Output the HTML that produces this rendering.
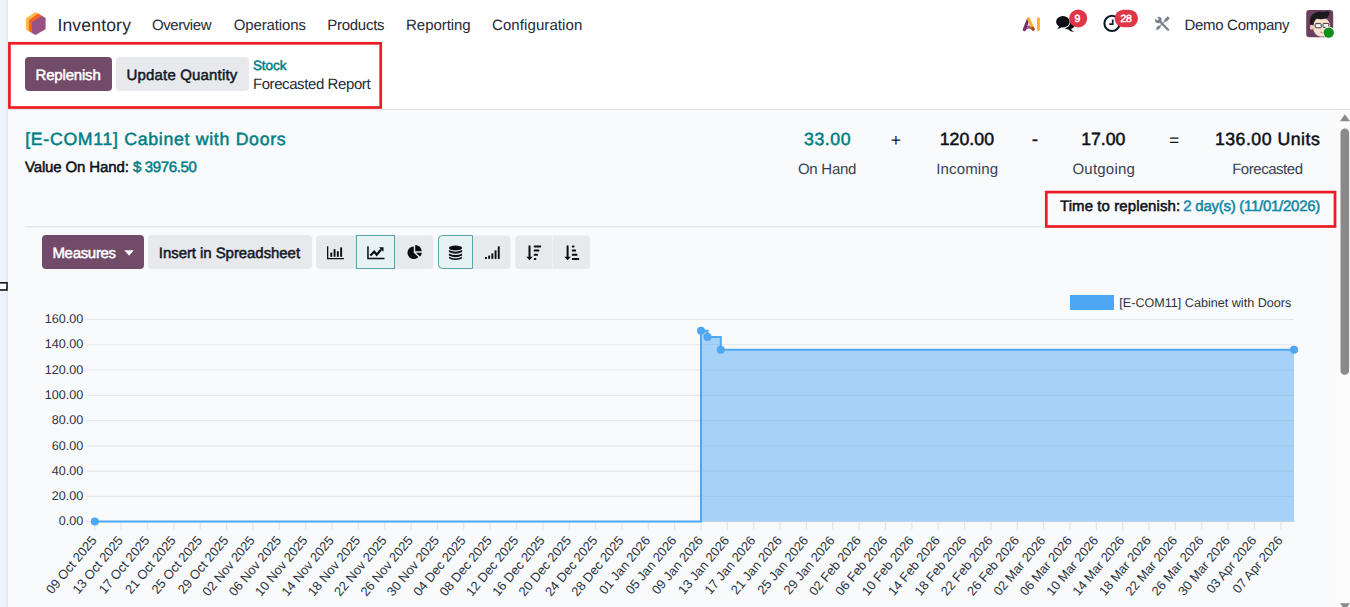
<!DOCTYPE html>
<html lang="en">
<head>
<meta charset="utf-8">
<title>Forecasted Report</title>
<style>
*{box-sizing:border-box;margin:0;padding:0}
html,body{width:1350px;height:607px;overflow:hidden;background:#f9fafb;font-family:"Liberation Sans",sans-serif;color:#1f2937}
.abs{position:absolute;white-space:nowrap}
.t{position:absolute;white-space:nowrap;line-height:1}
#strip{position:absolute;left:0;top:0;width:6px;height:607px;background:#ecf3fb}
#strip2{position:absolute;left:6px;top:0;width:2px;height:607px;background:#e4ebf0}
#nav{position:absolute;left:8px;top:0;width:1342px;height:46px;background:#fff}
#cp{position:absolute;left:8px;top:46px;width:1342px;height:64px;background:#fff;border-bottom:1px solid #dcdfe3}
.btn{position:absolute;border-radius:4px}
.chart text.ax{font-family:"Liberation Sans",sans-serif;font-size:12.6px;fill:#2d3442;text-rendering:geometricPrecision}
.sep{position:absolute;left:24px;top:225.5px;width:1296px;height:1px;background:#e1e3e6}
.ov{position:absolute;left:0;top:0;pointer-events:none}
</style>
</head>
<body>
<div id="strip"></div><div id="strip2"></div>
<div id="nav"></div>
<div id="cp"></div>

<!-- navbar -->
<svg class="abs" style="left:0;top:0" width="1350" height="46" viewBox="0 0 1350 46">
  <!-- app logo -->
  <polygon points="35.5,11.9 38.8,13.9 29.4,20.4 29.4,31.5 25.9,29.4 25.9,18.2" fill="#fbb945"/>
  <polygon points="28.9,20.1 38.3,13.6 42.3,16 32.4,22.4 32.4,33.2 28.9,31.2" fill="#f9651e"/>
  <polygon points="31.9,22.1 41.8,15.7 45.6,17.9 45.6,29.2 35.5,35.1 31.9,32.9" fill="#985184"/>
  <!-- AI icon -->
  <g fill="none" stroke-linecap="round" stroke-width="3">
    <path d="M1024.3,29.6 Q1029,24.5 1033.2,29.2" stroke="#a2568f"/>
    <path d="M1024.3,29.6 L1028.2,19.5" stroke="#7a2f6c"/>
    <path d="M1031.2,25.5 L1033.3,29.2" stroke="#a9481f"/>
    <path d="M1028.6,18.6 L1031.6,25.8" stroke="#fbb130"/>
    <path d="M1038.4,18.7 L1038.4,29.6" stroke="#fbb130"/>
  </g>
  <!-- chat icon -->
  <g fill="#0b0d14">
    <ellipse cx="1068.6" cy="24.6" rx="6.2" ry="4.9"/>
    <path d="M1070.6,28.6 q1.2,2.2 3.6,3.2 q-3.4,0.4 -6,-2.2z"/>
    <ellipse cx="1062.9" cy="21.8" rx="7.6" ry="6.5" fill="#fff"/>
    <ellipse cx="1062.9" cy="21.8" rx="6.8" ry="5.7"/>
    <path d="M1059.4,25.4 q-0.5,2 -2.2,3.4 q2.9,-0.1 4.8,-2z"/>
  </g>
  <circle cx="1078.2" cy="18.4" r="9" fill="#df3648"/>
  <!-- clock -->
  <circle cx="1112" cy="23.4" r="7.6" fill="#fff" stroke="#111827" stroke-width="2.1"/>
  <path d="M1112.7,19.4 V24.2 H1109.3" fill="none" stroke="#111827" stroke-width="1.7"/>
  <rect x="1114.7" y="9.7" width="23.3" height="17.6" rx="8.8" fill="#df3648"/>
  <!-- tools -->
  <g stroke="#7b818d" fill="none">
    <path d="M1160.2,21.8 L1168.1,29.8" stroke-width="2.3" stroke-linecap="round"/>
    <circle cx="1158.4" cy="20" r="3.3" fill="#7b818d" stroke="none"/>
    <path d="M1158.2,19.8 L1154.4,16" stroke="#fff" stroke-width="2.1"/>
    <path d="M1168.8,17.2 L1165,21" stroke-width="2.9"/>
    <path d="M1165.4,20.6 L1159.2,26.8" stroke-width="1.1"/>
    <path d="M1159.8,26.2 L1157,29" stroke-width="2.6"/>
    <path d="M1157.9,26.3 L1159.7,28.1 L1155.4,30.6z" fill="#7b818d" stroke="none"/>
  </g>
  <!-- avatar -->
  <g>
    <rect x="1306.2" y="10" width="27" height="27.3" rx="3.2" fill="#6b3f5d"/>
    <ellipse cx="1321.6" cy="27" rx="8.6" ry="9.8" fill="#f7dfd0"/>
    <ellipse cx="1311.6" cy="27.2" rx="1.6" ry="2.6" fill="#f1cdb8"/>
    <path d="M1309.8,24.5 q-1,-7.5 4,-11 q5,-3 10,-1.5 q3.5,-1.5 5.5,-0.2 q0.6,4 -2.6,6.4 q-6,1.8 -10,0.2 q-2.8,1.2 -3.4,6.6 q-2,-0.8 -3.5,-0.5z" fill="#1b1b1d"/>
    <rect x="1315.2" y="23.6" width="6" height="4.2" rx="0.8" fill="#f4f4f4" stroke="#3a3a3c" stroke-width="1"/>
    <rect x="1323" y="23.4" width="5.8" height="4" rx="0.8" fill="#f4f4f4" stroke="#3a3a3c" stroke-width="1"/>
    <path d="M1320.4,32 q2.4,1.6 5,0.2" stroke="#9a5a4e" stroke-width="0.8" fill="none"/>
    <circle cx="1328.7" cy="32.6" r="6" fill="#fff"/>
    <circle cx="1328.7" cy="32.6" r="5.2" fill="#0b8f1b"/>
  </g>
</svg>
<span class="t" style="left:57.41px;top:17.00px;font-size:17.5px;text-rendering:geometricPrecision;letter-spacing:0.186px;color:#1f2937">Inventory</span>
<span class="t" style="left:152.00px;top:18.21px;font-size:15px;text-rendering:geometricPrecision;letter-spacing:-0.433px;color:#1f2937">Overview</span>
<span class="t" style="left:233.70px;top:18.21px;font-size:15px;text-rendering:geometricPrecision;letter-spacing:-0.129px;color:#1f2937">Operations</span>
<span class="t" style="left:327.18px;top:18.21px;font-size:15px;text-rendering:geometricPrecision;letter-spacing:-0.250px;color:#1f2937">Products</span>
<span class="t" style="left:406.08px;top:18.21px;font-size:15px;text-rendering:geometricPrecision;letter-spacing:-0.057px;color:#1f2937">Reporting</span>
<span class="t" style="left:491.96px;top:18.21px;font-size:15px;text-rendering:geometricPrecision;letter-spacing:0.095px;color:#1f2937">Configuration</span>
<span class="t" style="left:1184.38px;top:18.21px;font-size:15px;text-rendering:geometricPrecision;letter-spacing:-0.292px;color:#1f2937">Demo Company</span>
<span class="t" style="left:1074.60px;top:13.76px;font-size:10.5px;text-rendering:geometricPrecision;-webkit-text-stroke:0.5px currentColor;letter-spacing:0.000px;color:#ffffff">9</span>
<span class="t" style="left:1120.48px;top:13.76px;font-size:10.5px;text-rendering:geometricPrecision;-webkit-text-stroke:0.5px currentColor;letter-spacing:-0.277px;color:#ffffff">28</span>

<!-- control panel -->
<div class="btn" style="left:24.7px;top:57.2px;width:87px;height:34px;background:#714b67"></div>
<span class="t" style="left:35.55px;top:67.77px;font-size:15px;text-rendering:geometricPrecision;-webkit-text-stroke:0.5px currentColor;letter-spacing:-0.187px;color:#ffffff">Replenish</span>
<div class="btn" style="left:116px;top:57.2px;width:132.6px;height:34px;background:#e7e9ed"></div>
<span class="t" style="left:126.61px;top:67.77px;font-size:15px;text-rendering:geometricPrecision;-webkit-text-stroke:0.5px currentColor;letter-spacing:0.162px;color:#111827">Update Quantity</span>
<span class="t" style="left:252.91px;top:58.76px;font-size:13.5px;text-rendering:geometricPrecision;-webkit-text-stroke:0.5px currentColor;letter-spacing:-0.046px;color:#017e84">Stock</span>
<span class="t" style="left:252.88px;top:77.21px;font-size:15px;text-rendering:geometricPrecision;letter-spacing:-0.407px;color:#1f2937">Forecasted Report</span>

<!-- header -->
<span class="t" style="left:25.21px;top:130.72px;font-size:17.7px;text-rendering:geometricPrecision;-webkit-text-stroke:0.5px currentColor;letter-spacing:0.701px;color:#017e84">[E-COM11] Cabinet with Doors</span>
<span class="t" style="left:24.97px;top:159.77px;font-size:15px;text-rendering:geometricPrecision;-webkit-text-stroke:0.5px currentColor;letter-spacing:-0.138px;color:#0b0f19">Value On Hand:</span>
<span class="t" style="left:132.93px;top:159.77px;font-size:15px;text-rendering:geometricPrecision;-webkit-text-stroke:0.5px currentColor;letter-spacing:-0.358px;color:#017e84">$ 3976.50</span>
<span class="t" style="left:804.05px;top:130.72px;font-size:17.7px;text-rendering:geometricPrecision;-webkit-text-stroke:0.5px currentColor;letter-spacing:0.563px;color:#017e84">33.00</span>
<span class="t" style="left:890.79px;top:131.50px;font-size:17.5px;text-rendering:geometricPrecision;letter-spacing:0.000px;color:#111827">+</span>
<span class="t" style="left:939.69px;top:130.72px;font-size:17.7px;text-rendering:geometricPrecision;-webkit-text-stroke:0.5px currentColor;letter-spacing:0.036px;color:#0b0f19">120.00</span>
<span class="t" style="left:1031.95px;top:130.72px;font-size:17.7px;text-rendering:geometricPrecision;-webkit-text-stroke:0.5px currentColor;letter-spacing:0.000px;color:#111827">-</span>
<span class="t" style="left:1081.29px;top:130.72px;font-size:17.7px;text-rendering:geometricPrecision;-webkit-text-stroke:0.5px currentColor;letter-spacing:-0.072px;color:#0b0f19">17.00</span>
<span class="t" style="left:1169.11px;top:131.50px;font-size:17.5px;text-rendering:geometricPrecision;letter-spacing:0.000px;color:#111827">=</span>
<span class="t" style="left:1214.89px;top:130.72px;font-size:17.7px;text-rendering:geometricPrecision;-webkit-text-stroke:0.5px currentColor;letter-spacing:0.512px;color:#0b0f19">136.00 Units</span>
<span class="t" style="left:797.90px;top:162.21px;font-size:15px;text-rendering:geometricPrecision;letter-spacing:-0.245px;color:#374151">On Hand</span>
<span class="t" style="left:936.22px;top:162.21px;font-size:15px;text-rendering:geometricPrecision;letter-spacing:0.150px;color:#374151">Incoming</span>
<span class="t" style="left:1072.40px;top:162.21px;font-size:15px;text-rendering:geometricPrecision;letter-spacing:0.240px;color:#374151">Outgoing</span>
<span class="t" style="left:1232.18px;top:162.21px;font-size:15px;text-rendering:geometricPrecision;letter-spacing:-0.462px;color:#374151">Forecasted</span>
<span class="t" style="left:1059.96px;top:198.77px;font-size:15px;text-rendering:geometricPrecision;-webkit-text-stroke:0.5px currentColor;letter-spacing:0.089px;color:#0b0f19">Time to replenish:</span>
<span class="t" style="left:1183.36px;top:198.77px;font-size:15px;text-rendering:geometricPrecision;-webkit-text-stroke:0.5px currentColor;letter-spacing:-0.267px;color:#0d87a6">2 day(s) (11/01/2026)</span>


<!-- toolbar -->
<div class="btn" style="left:41.6px;top:235.3px;width:102.2px;height:33.7px;background:#714b67"></div>
<span class="t" style="left:52.45px;top:245.77px;font-size:15px;text-rendering:geometricPrecision;-webkit-text-stroke:0.5px currentColor;letter-spacing:-0.315px;color:#ffffff">Measures</span>
<div class="btn" style="left:148px;top:235.3px;width:163.8px;height:33.7px;background:#e7e9ed"></div>
<span class="t" style="left:158.87px;top:245.77px;font-size:15px;text-rendering:geometricPrecision;-webkit-text-stroke:0.5px currentColor;letter-spacing:-0.070px;color:#111827">Insert in Spreadsheet</span>
<svg class="abs" style="left:0;top:230px" width="620" height="45" viewBox="0 230 620 45">
  <path d="M124.4,250.3 h9.4 l-4.7,5.5z" fill="#fff"/>
  <!-- group 1 -->
  <rect x="316.1" y="235.4" width="117.5" height="33.6" rx="4" fill="#e7e9ed"/>
  <rect x="356.5" y="235.5" width="38" height="33" fill="#e6f2f3" stroke="#5aa5a9" stroke-width="1"/>
  <!-- bar chart icon -->
  <g fill="#0b0d14">
    <path d="M327,246.3 h1.3 v11.6 h15.6 v1.3 h-16.9z"/>
    <rect x="330.3" y="252.6" width="1.9" height="4.2"/>
    <rect x="333.6" y="249.2" width="1.9" height="7.6"/>
    <rect x="336.9" y="251.2" width="1.9" height="5.6"/>
    <rect x="340.2" y="247.4" width="1.9" height="9.4"/>
  </g>
  <!-- line chart icon -->
  <g fill="#0b0d14">
    <path d="M367.2,246.2 h1.5 v11.6 h15.8 v1.4 h-17.3z"/>
    <path d="M370.3,255.5 l3.9,-3.9 l2.5,3.1 l4.4,-5.2" fill="none" stroke="#0b0d14" stroke-width="2.3" stroke-linejoin="miter"/>
    <path d="M379.0,247.2 h4.5 v4.6z"/>
  </g>
  <!-- pie icon -->
  <g fill="#0b0d14">
    <path d="M413.8,246.4 a6.3,6.3 0 1 0 4.6,10.6 l-4.6,-4.3z"/>
    <path d="M415.2,244.9 a6.4,6.4 0 0 1 6.4,6.4 h-6.4z"/>
    <path d="M415.9,252.7 h5.9 a6.4,6.4 0 0 1 -1.8,3.9z"/>
  </g>
  <!-- group 2 -->
  <rect x="438.2" y="235.4" width="72.2" height="33.6" rx="4" fill="#e7e9ed"/>
  <path d="M442.5,235.5 h30 v33 h-30 a4,4 0 0 1 -4,-4 v-25 a4,4 0 0 1 4,-4z" fill="#e6f2f3" stroke="#5aa5a9" stroke-width="1"/>
  <!-- database icon -->
  <g fill="#0b0d14">
    <ellipse cx="455.5" cy="248" rx="6.6" ry="2.5"/>
    <path d="M448.9,250 q6.6,3.4 13.2,0 v2 q-6.6,3.6 -13.2,0z"/>
    <path d="M448.9,253.4 q6.6,3.4 13.2,0 v2 q-6.6,3.6 -13.2,0z"/>
    <path d="M448.9,256.8 q6.6,3.4 13.2,0 v0.6 a6.6,2.5 0 0 1 -13.2,0z"/>
  </g>
  <!-- signal icon -->
  <g fill="#0b0d14">
    <rect x="485" y="257" width="1.9" height="1.9"/>
    <rect x="488.2" y="255.6" width="1.9" height="3.3"/>
    <rect x="491.4" y="253.4" width="1.9" height="5.5"/>
    <rect x="494.6" y="250.4" width="1.9" height="8.5"/>
    <rect x="497.8" y="246.3" width="1.9" height="12.6"/>
  </g>
  <!-- group 3 -->
  <rect x="515.3" y="235.4" width="74.9" height="33.6" rx="4" fill="#e7e9ed"/>
  <rect x="551.9" y="235.4" width="0.8" height="33.6" fill="#f1f2f4"/>
  <!-- sort desc -->
  <g fill="#0b0d14">
    <path d="M528.5,246.3 a1,1 0 0 1 2,0 v10.4 h2.2 l-3.2,3.5 l-3.2,-3.5 h2.2z"/>
    <rect x="533.7" y="245.4" width="7.5" height="2" rx="0.9"/>
    <rect x="533.7" y="249.6" width="5.7" height="2" rx="0.9"/>
    <rect x="533.7" y="253.8" width="4.3" height="2" rx="0.9"/>
    <rect x="533.7" y="258.0" width="2.7" height="2" rx="0.9"/>
  </g>
  <!-- sort asc -->
  <g fill="#0b0d14">
    <path d="M566.6,246.3 a1,1 0 0 1 2,0 v10.4 h2.2 l-3.2,3.5 l-3.2,-3.5 h2.2z"/>
    <rect x="571.8" y="245.4" width="2.7" height="2" rx="0.9"/>
    <rect x="571.8" y="249.6" width="4.3" height="2" rx="0.9"/>
    <rect x="571.8" y="253.8" width="5.7" height="2" rx="0.9"/>
    <rect x="571.8" y="258.0" width="7.5" height="2" rx="0.9"/>
  </g>
  </svg>

<svg class="chart" width="1350" height="607" viewBox="0 0 1350 607" style="position:absolute;left:0;top:0">
<line x1="86.5" x2="1294.0" y1="521.60" y2="521.60" stroke="#e5e6e9" stroke-width="1.2"/>
<text x="83.3" y="525.30" text-anchor="end" class="ax">0.00</text>
<line x1="86.5" x2="1294.0" y1="496.34" y2="496.34" stroke="#e5e6e9" stroke-width="1.2"/>
<text x="83.3" y="500.04" text-anchor="end" class="ax">20.00</text>
<line x1="86.5" x2="1294.0" y1="471.08" y2="471.08" stroke="#e5e6e9" stroke-width="1.2"/>
<text x="83.3" y="474.78" text-anchor="end" class="ax">40.00</text>
<line x1="86.5" x2="1294.0" y1="445.81" y2="445.81" stroke="#e5e6e9" stroke-width="1.2"/>
<text x="83.3" y="449.51" text-anchor="end" class="ax">60.00</text>
<line x1="86.5" x2="1294.0" y1="420.55" y2="420.55" stroke="#e5e6e9" stroke-width="1.2"/>
<text x="83.3" y="424.25" text-anchor="end" class="ax">80.00</text>
<line x1="86.5" x2="1294.0" y1="395.29" y2="395.29" stroke="#e5e6e9" stroke-width="1.2"/>
<text x="83.3" y="398.99" text-anchor="end" class="ax">100.00</text>
<line x1="86.5" x2="1294.0" y1="370.02" y2="370.02" stroke="#e5e6e9" stroke-width="1.2"/>
<text x="83.3" y="373.72" text-anchor="end" class="ax">120.00</text>
<line x1="86.5" x2="1294.0" y1="344.76" y2="344.76" stroke="#e5e6e9" stroke-width="1.2"/>
<text x="83.3" y="348.46" text-anchor="end" class="ax">140.00</text>
<line x1="86.5" x2="1294.0" y1="319.50" y2="319.50" stroke="#e5e6e9" stroke-width="1.2"/>
<text x="83.3" y="323.20" text-anchor="end" class="ax">160.00</text>
<line x1="94.80" x2="94.80" y1="521.6" y2="529.6" stroke="#e5e6e9" stroke-width="1.2"/>
<text class="ax" style="font-size:12.95px" text-anchor="end" transform="translate(93.90,537.9) rotate(-50)" dy="4.5">09 Oct 2025</text>
<line x1="121.16" x2="121.16" y1="521.6" y2="529.6" stroke="#e5e6e9" stroke-width="1.2"/>
<text class="ax" style="font-size:12.95px" text-anchor="end" transform="translate(120.26,537.9) rotate(-50)" dy="4.5">13 Oct 2025</text>
<line x1="147.51" x2="147.51" y1="521.6" y2="529.6" stroke="#e5e6e9" stroke-width="1.2"/>
<text class="ax" style="font-size:12.95px" text-anchor="end" transform="translate(146.61,537.9) rotate(-50)" dy="4.5">17 Oct 2025</text>
<line x1="173.87" x2="173.87" y1="521.6" y2="529.6" stroke="#e5e6e9" stroke-width="1.2"/>
<text class="ax" style="font-size:12.95px" text-anchor="end" transform="translate(172.97,537.9) rotate(-50)" dy="4.5">21 Oct 2025</text>
<line x1="200.22" x2="200.22" y1="521.6" y2="529.6" stroke="#e5e6e9" stroke-width="1.2"/>
<text class="ax" style="font-size:12.95px" text-anchor="end" transform="translate(199.32,537.9) rotate(-50)" dy="4.5">25 Oct 2025</text>
<line x1="226.58" x2="226.58" y1="521.6" y2="529.6" stroke="#e5e6e9" stroke-width="1.2"/>
<text class="ax" style="font-size:12.95px" text-anchor="end" transform="translate(225.68,537.9) rotate(-50)" dy="4.5">29 Oct 2025</text>
<line x1="252.94" x2="252.94" y1="521.6" y2="529.6" stroke="#e5e6e9" stroke-width="1.2"/>
<text class="ax" style="font-size:12.95px" text-anchor="end" transform="translate(252.04,537.9) rotate(-50)" dy="4.5">02 Nov 2025</text>
<line x1="279.29" x2="279.29" y1="521.6" y2="529.6" stroke="#e5e6e9" stroke-width="1.2"/>
<text class="ax" style="font-size:12.95px" text-anchor="end" transform="translate(278.39,537.9) rotate(-50)" dy="4.5">06 Nov 2025</text>
<line x1="305.65" x2="305.65" y1="521.6" y2="529.6" stroke="#e5e6e9" stroke-width="1.2"/>
<text class="ax" style="font-size:12.95px" text-anchor="end" transform="translate(304.75,537.9) rotate(-50)" dy="4.5">10 Nov 2025</text>
<line x1="332.00" x2="332.00" y1="521.6" y2="529.6" stroke="#e5e6e9" stroke-width="1.2"/>
<text class="ax" style="font-size:12.95px" text-anchor="end" transform="translate(331.10,537.9) rotate(-50)" dy="4.5">14 Nov 2025</text>
<line x1="358.36" x2="358.36" y1="521.6" y2="529.6" stroke="#e5e6e9" stroke-width="1.2"/>
<text class="ax" style="font-size:12.95px" text-anchor="end" transform="translate(357.46,537.9) rotate(-50)" dy="4.5">18 Nov 2025</text>
<line x1="384.72" x2="384.72" y1="521.6" y2="529.6" stroke="#e5e6e9" stroke-width="1.2"/>
<text class="ax" style="font-size:12.95px" text-anchor="end" transform="translate(383.82,537.9) rotate(-50)" dy="4.5">22 Nov 2025</text>
<line x1="411.07" x2="411.07" y1="521.6" y2="529.6" stroke="#e5e6e9" stroke-width="1.2"/>
<text class="ax" style="font-size:12.95px" text-anchor="end" transform="translate(410.17,537.9) rotate(-50)" dy="4.5">26 Nov 2025</text>
<line x1="437.43" x2="437.43" y1="521.6" y2="529.6" stroke="#e5e6e9" stroke-width="1.2"/>
<text class="ax" style="font-size:12.95px" text-anchor="end" transform="translate(436.53,537.9) rotate(-50)" dy="4.5">30 Nov 2025</text>
<line x1="463.78" x2="463.78" y1="521.6" y2="529.6" stroke="#e5e6e9" stroke-width="1.2"/>
<text class="ax" style="font-size:12.95px" text-anchor="end" transform="translate(462.88,537.9) rotate(-50)" dy="4.5">04 Dec 2025</text>
<line x1="490.14" x2="490.14" y1="521.6" y2="529.6" stroke="#e5e6e9" stroke-width="1.2"/>
<text class="ax" style="font-size:12.95px" text-anchor="end" transform="translate(489.24,537.9) rotate(-50)" dy="4.5">08 Dec 2025</text>
<line x1="516.50" x2="516.50" y1="521.6" y2="529.6" stroke="#e5e6e9" stroke-width="1.2"/>
<text class="ax" style="font-size:12.95px" text-anchor="end" transform="translate(515.60,537.9) rotate(-50)" dy="4.5">12 Dec 2025</text>
<line x1="542.85" x2="542.85" y1="521.6" y2="529.6" stroke="#e5e6e9" stroke-width="1.2"/>
<text class="ax" style="font-size:12.95px" text-anchor="end" transform="translate(541.95,537.9) rotate(-50)" dy="4.5">16 Dec 2025</text>
<line x1="569.21" x2="569.21" y1="521.6" y2="529.6" stroke="#e5e6e9" stroke-width="1.2"/>
<text class="ax" style="font-size:12.95px" text-anchor="end" transform="translate(568.31,537.9) rotate(-50)" dy="4.5">20 Dec 2025</text>
<line x1="595.56" x2="595.56" y1="521.6" y2="529.6" stroke="#e5e6e9" stroke-width="1.2"/>
<text class="ax" style="font-size:12.95px" text-anchor="end" transform="translate(594.66,537.9) rotate(-50)" dy="4.5">24 Dec 2025</text>
<line x1="621.92" x2="621.92" y1="521.6" y2="529.6" stroke="#e5e6e9" stroke-width="1.2"/>
<text class="ax" style="font-size:12.95px" text-anchor="end" transform="translate(621.02,537.9) rotate(-50)" dy="4.5">28 Dec 2025</text>
<line x1="648.28" x2="648.28" y1="521.6" y2="529.6" stroke="#e5e6e9" stroke-width="1.2"/>
<text class="ax" style="font-size:12.95px" text-anchor="end" transform="translate(647.38,537.9) rotate(-50)" dy="4.5">01 Jan 2026</text>
<line x1="674.63" x2="674.63" y1="521.6" y2="529.6" stroke="#e5e6e9" stroke-width="1.2"/>
<text class="ax" style="font-size:12.95px" text-anchor="end" transform="translate(673.73,537.9) rotate(-50)" dy="4.5">05 Jan 2026</text>
<line x1="700.99" x2="700.99" y1="521.6" y2="529.6" stroke="#e5e6e9" stroke-width="1.2"/>
<text class="ax" style="font-size:12.95px" text-anchor="end" transform="translate(700.09,537.9) rotate(-50)" dy="4.5">09 Jan 2026</text>
<line x1="727.35" x2="727.35" y1="521.6" y2="529.6" stroke="#e5e6e9" stroke-width="1.2"/>
<text class="ax" style="font-size:12.95px" text-anchor="end" transform="translate(726.45,537.9) rotate(-50)" dy="4.5">13 Jan 2026</text>
<line x1="753.70" x2="753.70" y1="521.6" y2="529.6" stroke="#e5e6e9" stroke-width="1.2"/>
<text class="ax" style="font-size:12.95px" text-anchor="end" transform="translate(752.80,537.9) rotate(-50)" dy="4.5">17 Jan 2026</text>
<line x1="780.06" x2="780.06" y1="521.6" y2="529.6" stroke="#e5e6e9" stroke-width="1.2"/>
<text class="ax" style="font-size:12.95px" text-anchor="end" transform="translate(779.16,537.9) rotate(-50)" dy="4.5">21 Jan 2026</text>
<line x1="806.41" x2="806.41" y1="521.6" y2="529.6" stroke="#e5e6e9" stroke-width="1.2"/>
<text class="ax" style="font-size:12.95px" text-anchor="end" transform="translate(805.51,537.9) rotate(-50)" dy="4.5">25 Jan 2026</text>
<line x1="832.77" x2="832.77" y1="521.6" y2="529.6" stroke="#e5e6e9" stroke-width="1.2"/>
<text class="ax" style="font-size:12.95px" text-anchor="end" transform="translate(831.87,537.9) rotate(-50)" dy="4.5">29 Jan 2026</text>
<line x1="859.13" x2="859.13" y1="521.6" y2="529.6" stroke="#e5e6e9" stroke-width="1.2"/>
<text class="ax" style="font-size:12.95px" text-anchor="end" transform="translate(858.23,537.9) rotate(-50)" dy="4.5">02 Feb 2026</text>
<line x1="885.48" x2="885.48" y1="521.6" y2="529.6" stroke="#e5e6e9" stroke-width="1.2"/>
<text class="ax" style="font-size:12.95px" text-anchor="end" transform="translate(884.58,537.9) rotate(-50)" dy="4.5">06 Feb 2026</text>
<line x1="911.84" x2="911.84" y1="521.6" y2="529.6" stroke="#e5e6e9" stroke-width="1.2"/>
<text class="ax" style="font-size:12.95px" text-anchor="end" transform="translate(910.94,537.9) rotate(-50)" dy="4.5">10 Feb 2026</text>
<line x1="938.19" x2="938.19" y1="521.6" y2="529.6" stroke="#e5e6e9" stroke-width="1.2"/>
<text class="ax" style="font-size:12.95px" text-anchor="end" transform="translate(937.29,537.9) rotate(-50)" dy="4.5">14 Feb 2026</text>
<line x1="964.55" x2="964.55" y1="521.6" y2="529.6" stroke="#e5e6e9" stroke-width="1.2"/>
<text class="ax" style="font-size:12.95px" text-anchor="end" transform="translate(963.65,537.9) rotate(-50)" dy="4.5">18 Feb 2026</text>
<line x1="990.91" x2="990.91" y1="521.6" y2="529.6" stroke="#e5e6e9" stroke-width="1.2"/>
<text class="ax" style="font-size:12.95px" text-anchor="end" transform="translate(990.01,537.9) rotate(-50)" dy="4.5">22 Feb 2026</text>
<line x1="1017.26" x2="1017.26" y1="521.6" y2="529.6" stroke="#e5e6e9" stroke-width="1.2"/>
<text class="ax" style="font-size:12.95px" text-anchor="end" transform="translate(1016.36,537.9) rotate(-50)" dy="4.5">26 Feb 2026</text>
<line x1="1043.62" x2="1043.62" y1="521.6" y2="529.6" stroke="#e5e6e9" stroke-width="1.2"/>
<text class="ax" style="font-size:12.95px" text-anchor="end" transform="translate(1042.72,537.9) rotate(-50)" dy="4.5">02 Mar 2026</text>
<line x1="1069.97" x2="1069.97" y1="521.6" y2="529.6" stroke="#e5e6e9" stroke-width="1.2"/>
<text class="ax" style="font-size:12.95px" text-anchor="end" transform="translate(1069.07,537.9) rotate(-50)" dy="4.5">06 Mar 2026</text>
<line x1="1096.33" x2="1096.33" y1="521.6" y2="529.6" stroke="#e5e6e9" stroke-width="1.2"/>
<text class="ax" style="font-size:12.95px" text-anchor="end" transform="translate(1095.43,537.9) rotate(-50)" dy="4.5">10 Mar 2026</text>
<line x1="1122.69" x2="1122.69" y1="521.6" y2="529.6" stroke="#e5e6e9" stroke-width="1.2"/>
<text class="ax" style="font-size:12.95px" text-anchor="end" transform="translate(1121.79,537.9) rotate(-50)" dy="4.5">14 Mar 2026</text>
<line x1="1149.04" x2="1149.04" y1="521.6" y2="529.6" stroke="#e5e6e9" stroke-width="1.2"/>
<text class="ax" style="font-size:12.95px" text-anchor="end" transform="translate(1148.14,537.9) rotate(-50)" dy="4.5">18 Mar 2026</text>
<line x1="1175.40" x2="1175.40" y1="521.6" y2="529.6" stroke="#e5e6e9" stroke-width="1.2"/>
<text class="ax" style="font-size:12.95px" text-anchor="end" transform="translate(1174.50,537.9) rotate(-50)" dy="4.5">22 Mar 2026</text>
<line x1="1201.75" x2="1201.75" y1="521.6" y2="529.6" stroke="#e5e6e9" stroke-width="1.2"/>
<text class="ax" style="font-size:12.95px" text-anchor="end" transform="translate(1200.85,537.9) rotate(-50)" dy="4.5">26 Mar 2026</text>
<line x1="1228.11" x2="1228.11" y1="521.6" y2="529.6" stroke="#e5e6e9" stroke-width="1.2"/>
<text class="ax" style="font-size:12.95px" text-anchor="end" transform="translate(1227.21,537.9) rotate(-50)" dy="4.5">30 Mar 2026</text>
<line x1="1254.47" x2="1254.47" y1="521.6" y2="529.6" stroke="#e5e6e9" stroke-width="1.2"/>
<text class="ax" style="font-size:12.95px" text-anchor="end" transform="translate(1253.57,537.9) rotate(-50)" dy="4.5">03 Apr 2026</text>
<line x1="1280.82" x2="1280.82" y1="521.6" y2="529.6" stroke="#e5e6e9" stroke-width="1.2"/>
<text class="ax" style="font-size:12.95px" text-anchor="end" transform="translate(1279.92,537.9) rotate(-50)" dy="4.5">07 Apr 2026</text>
<path d="M94.80,521.60 L700.99,521.60 L700.99,330.87 L707.58,330.87 L707.58,336.93 L720.76,336.93 L720.76,349.81 L1294.00,349.81 L1294.00,521.6 L94.80,521.6 Z" fill="#4ea7f2" fill-opacity="0.48"/>
<path d="M94.80,521.60 L700.99,521.60 L700.99,330.87 L707.58,330.87 L707.58,336.93 L720.76,336.93 L720.76,349.81 L1294.00,349.81" fill="none" stroke="#4ea7f2" stroke-width="2" stroke-linejoin="miter"/>
<circle cx="94.80" cy="521.60" r="4" fill="#4ea7f2"/>
<circle cx="700.99" cy="330.87" r="4" fill="#4ea7f2"/>
<circle cx="707.58" cy="336.93" r="4" fill="#4ea7f2"/>
<circle cx="720.76" cy="349.81" r="4" fill="#4ea7f2"/>
<circle cx="1294.00" cy="349.81" r="4" fill="#4ea7f2"/>
<rect x="1070" y="295" width="44" height="15" fill="#4ea7f2"/>
<text x="1119.3" y="306.8" class="ax">[E-COM11] Cabinet with Doors</text>
</svg>

<!-- scrollbar -->
<svg class="ov" width="1350" height="607" viewBox="0 0 1350 607">
  <rect x="1337.3" y="110" width="12.7" height="497" fill="#fbfbfc"/>
  <path d="M1344.9,114.2 L1350,121.3 H1339.8z" fill="#8a8a8a"/>
  <rect x="1340.5" y="128.4" width="8.6" height="246.4" rx="4.3" fill="#8a8a8a"/>
  <path d="M1340,603.2 H1350 L1345,610z" fill="#8a8a8a"/>
  <rect x="24.9" y="226.2" width="1295.6" height="1.3" fill="#e3e5e8"/>
  <!-- annotation boxes -->
  <rect x="9.4" y="43.3" width="371.3" height="64.2" fill="none" stroke="#ed1c24" stroke-width="2.7"/>
  <rect x="1046.3" y="192.1" width="288.7" height="34.4" fill="none" stroke="#ed1c24" stroke-width="2.7"/>
  <!-- handle -->
  <rect x="-2" y="282.8" width="9" height="7.2" fill="#fff" stroke="#151515" stroke-width="1.6"/>
</svg>
</body>
</html>
